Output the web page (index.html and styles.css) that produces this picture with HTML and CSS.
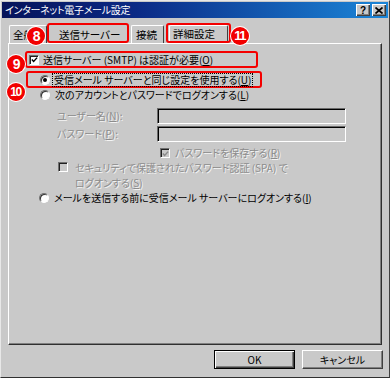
FILE: index.html
```html
<!DOCTYPE html>
<html lang="ja">
<head>
<meta charset="utf-8">
<link rel="stylesheet" href="styles.css">
</head>
<body>
<div class="window">
  <div class="titlebar">
    <span class="title">インターネット電子メール設定</span>
    <div class="caption-btns">
      <span class="cbtn">?</span>
      <span class="cbtn"><svg width="8" height="7" viewBox="0 0 8 7"><path d="M0.5 0.5L7.5 6.5M7.5 0.5L0.5 6.5" stroke="#000" stroke-width="1.7"/></svg></span>
    </div>
  </div>

  <div class="tabs">
    <div class="tab first">全般</div>
    <span class="badge badge-8">8</span>
    <div class="mark mark-tab"><div class="tab active">送信サーバー</div></div>
    <div class="tab plain">接続</div>
    <div class="mark mark-tab2"><div class="tab inner">詳細設定</div></div>
    <span class="badge badge-11">11</span>
  </div>

  <div class="panel">
    <div class="mark row-auth">
      <span class="badge badge-9">9</span>
      <span class="check"><svg width="8" height="8" viewBox="0 0 8 8"><path d="M1 3.5L3 5.7L7 1.3" fill="none" stroke="#000" stroke-width="1.6"/></svg></span>
      <span class="label">送信サーバー (SMTP) は認証が必要(<u>O</u>)</span>
    </div>

    <div class="mark row-same">
      <span class="badge badge-10">10</span>
      <span class="radio on"></span>
      <span class="label focus">受信メール サーバーと同じ設定を使用する(<u>U</u>)</span>
    </div>

    <div class="row row-logon">
      <span class="radio"></span>
      <span class="label">次のアカウントとパスワードでログオンする(<u>L</u>)</span>
    </div>

    <div class="field-row row-user">
      <span class="label disabled">ユーザー名(<u>N</u>):</span>
      <span class="field"></span>
    </div>
    <div class="field-row row-pass">
      <span class="label disabled">パスワード(<u>P</u>):</span>
      <span class="field"></span>
    </div>

    <div class="row row-save">
      <span class="check dis"><svg width="8" height="8" viewBox="0 0 8 8"><path d="M1 3.5L3 5.7L7 1.3" fill="none" stroke="#8a8a8a" stroke-width="1.6"/></svg></span>
      <span class="label disabled">パスワードを保存する(<u>R</u>)</span>
    </div>

    <div class="row row-spa">
      <span class="check dis-empty"></span>
      <span class="label disabled spa">セキュリティで保護されたパスワード認証 (SPA) で<br>ログオンする(<u>S</u>)</span>
    </div>

    <div class="row row-before">
      <span class="radio"></span>
      <span class="label">メールを送信する前に受信メール サーバーにログオンする(<u>I</u>)</span>
    </div>
  </div>

  <div class="footer">
    <button class="btn default">OK</button>
    <button class="btn">キャンセル</button>
  </div>
</div>
</body>
</html>
```

FILE: styles.css
```css
* { box-sizing: border-box; }
html, body { margin: 0; padding: 0; }
body {
  width: 390px;
  height: 378px;
  overflow: hidden;
  background: #c9c9c9;
  font-family: "Noto Sans CJK JP", "Noto Sans", sans-serif;
  font-size: 10px;
  font-feature-settings: "palt";
  color: #000;
}
.window {
  width: 390px;
  height: 378px;
  border: 1px solid;
  border-color: #e8e8e8 #404040 #303030 #e8e8e8;
  padding: 1px;
  display: flex;
  flex-direction: column;
  background: #c9c9c9;
}
.titlebar {
  height: 16px;
  flex: none;
  display: flex;
  align-items: center;
  justify-content: space-between;
  padding: 0 2px 0 3px;
  background: linear-gradient(90deg, #06135a 0%, #0b2a86 35%, #1b86d8 100%);
  color: #fff;
}
.title { font-size: 10px; line-height: 12px; letter-spacing: -0.3px; }
.caption-btns { display: flex; gap: 2px; }
.cbtn {
  width: 14px;
  height: 12px;
  background: #c9c9c9;
  display: flex;
  align-items: center;
  justify-content: center;
  color: #000;
  font-family: "Liberation Sans", sans-serif;
  font-weight: bold;
  font-size: 10px;
  box-shadow: inset 1px 1px #fff, inset -1px -1px #404040, inset -2px -2px #808080;
}

.tabs {
  height: 25px;
  flex: none;
  display: flex;
  align-items: flex-end;
  padding-left: 7px;
  position: relative;
}
.tab {
  height: 18px;
  display: flex;
  align-items: center;
  padding: 0 4px;
  font-size: 10.5px;
  border-top: 1px solid #fff;
  border-left: 1px solid #fff;
  border-right: 1px solid #404040;
  border-radius: 2px 2px 0 0;
}
.tab.first { width: 38px; padding-left: 3px; }
.mark { border: 2px solid #f40000; border-radius: 3px; position: relative; }
.mark-tab { width: 82px; height: 20px; display: flex; }
.mark-tab .tab.active {
  height: 16px;
  border: none;
  padding-left: 10px;
  width: 100%;
  margin-top: 1px;
}
.tab.plain { margin-left: 2px; width: 33px; padding-left: 4px; }
.mark-tab2 { width: 65px; height: 20px; margin-left: 2px; display: flex; align-items: flex-end; padding: 0 1px; }
.mark-tab2 .tab.inner { height: 16px; width: 100%; padding-left: 3px; }

.badge {
  position: absolute;
  width: 18px;
  height: 18px;
  border-radius: 50%;
  background: #f20000;
  color: #fff;
  font-family: "Liberation Sans", sans-serif;
  font-weight: bold;
  font-size: 14px;
  line-height: 18px;
  text-align: center;
  letter-spacing: -1.5px;
  box-shadow: 0 0 0 1px #fff;
}
.badge-8 { left: 25px; top: 9px; }
.badge-11 { left: 229px; top: 9px; font-size: 13px; padding-right: 1px; }
.badge-9 { left: -20px; top: 2px; }
.badge-10 { left: -21px; top: 10px; font-size: 12px; padding-right: 1px; }

.panel {
  height: 302px;
  flex: none;
  margin: 0 6px;
  border: 1px solid;
  border-color: #fff #303030 #303030 #fff;
  box-shadow: inset -1px -1px #808080;
  display: flex;
  flex-direction: column;
  align-items: flex-start;
}
.label { line-height: 12px; white-space: nowrap; }
.label u { text-decoration-thickness: 1px; text-underline-offset: 1px; }
.disabled { color: #8c8c8c; text-shadow: 1px 1px 0 #f4f4f4; }
.spa { line-height: 15px; margin-top: -2px; }

.row-auth {
  margin: 7px 0 0 16px;
  width: 233px;
  height: 17px;
  display: flex;
  align-items: center;
  padding-left: 2px;
  gap: 4px;
}
.row-same {
  margin: 3px 0 0 17px;
  width: 236px;
  height: 17px;
  display: flex;
  align-items: center;
  padding-left: 12px;
  gap: 3px;
}
.focus { outline: 1px dotted #000; outline-offset: 0; padding: 0 1px; }
.row { display: flex; align-items: center; gap: 5px; }
.row-logon { margin: 1px 0 0 31px; }
.field-row { display: flex; align-items: center; }
.field-row .label { width: 100px; }
.row-user { margin: 7px 0 0 48px; }
.row-pass { margin: 2px 0 0 48px; }
.field {
  width: 189px;
  height: 16px;
  border: 1px solid;
  border-color: #6a6a6a #fff #fff #6a6a6a;
  box-shadow: inset 1px 1px #000;
  background: #c9c9c9;
}
.row-save { margin: 5px 0 0 151px; }
.row-spa { margin: 3px 0 0 49px; align-items: flex-start; gap: 7px; }
.row-before { margin: 2px 0 0 30px; }

.check {
  width: 10px;
  height: 10px;
  flex: none;
  background: #fff;
  border: 1px solid;
  border-color: #707070 #fff #fff #707070;
  box-shadow: inset 1px 1px #202020;
  display: flex;
  align-items: center;
  justify-content: center;
}
.check svg { margin: 1px 0 0 1px; }
.check.dis, .check.dis-empty { background: #c9c9c9; }
.radio {
  width: 10px;
  height: 10px;
  flex: none;
  border-radius: 50%;
  background: #fff;
  border: 1px solid;
  border-color: #707070 #fff #fff #707070;
  box-shadow: inset 1px 1px #303030;
  display: flex;
  align-items: center;
  justify-content: center;
}
.radio.on::after {
  content: "";
  width: 4px;
  height: 4px;
  border-radius: 50%;
  background: #000;
}

.footer {
  flex: 1;
  display: flex;
  justify-content: flex-end;
  align-items: flex-start;
  gap: 7px;
  padding: 5px 5px 0 0;
}
.btn {
  width: 81px;
  height: 19px;
  padding: 0;
  font-family: "Noto Sans CJK JP", "Liberation Sans", sans-serif;
  font-feature-settings: "palt";
  font-size: 10px;
  color: #000;
  background: #c9c9c9;
  border: 1px solid;
  border-color: #fff #404040 #404040 #fff;
  box-shadow: inset -1px -1px #808080;
}
.btn.default {
  border-color: #000;
  box-shadow: inset 1px 1px #fff, inset -1px -1px #404040, inset -2px -2px #808080;
}
```
